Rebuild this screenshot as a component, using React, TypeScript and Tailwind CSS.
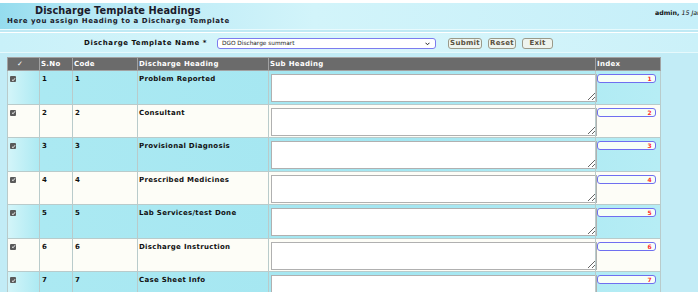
import React from "react";

const rows = [
  { n: 1, h: "Problem Reported" },
  { n: 2, h: "Consultant" },
  { n: 3, h: "Provisional Diagnosis" },
  { n: 4, h: "Prescribed Medicines" },
  { n: 5, h: "Lab Services/test Done" },
  { n: 6, h: "Discharge Instruction" },
  { n: 7, h: "Case Sheet Info" },
];

function Check() {
  return (
    <div className="w-[6px] h-[6px] bg-[#5a5a5a] rounded-[1px] flex items-center justify-center">
      <svg width="5" height="5" viewBox="0 0 10 10">
        <path d="M2 5.5 L4.2 7.5 L8 2.5" stroke="white" strokeWidth="1.8" fill="none" />
      </svg>
    </div>
  );
}

export default function App() {
  return (
    <div className="w-[698px] h-[292px] overflow-hidden bg-[#c2ecf6] font-['DejaVu_Sans',Verdana,sans-serif] text-[#111]">
      <div className="h-[3px] bg-white" />
      <div className="h-[26px] bg-[linear-gradient(to_right,#95dcee_0%,#b5e8f5_12%,#d2f4fa_45%,#c6eff9_100%)] flex justify-between">
        <div className="flex flex-col">
          <div className="pl-[35px] pt-[1px] text-[9.8px] leading-[13px] font-bold tracking-[0.05px] text-[#1b1b2b]">Discharge Template Headings</div>
          <div className="pl-[7px] text-[7px] leading-[9px] font-bold tracking-[0.55px] text-[#1b1b2b]">Here you assign Heading to a Discharge Template</div>
        </div>
        <div className="pt-[6px] w-[43px] whitespace-nowrap overflow-hidden text-[6.3px] leading-[8px]">
          <span className="font-bold">admin,</span> <span className="italic">15 Jan</span>
        </div>
      </div>
      <div className="h-[1px] bg-[#e8fafd]" />
      <div className="h-[2px] bg-[#bfe9f4]" />
      <div className="h-[1px] bg-white" />
      <div className="h-[20px] bg-[linear-gradient(to_right,#c9f1f9,#d9f6fb_50%,#cbf1f9)] border-b border-[#e6f9fc] flex items-center pt-[2px]">
        <div className="w-[207px] text-right text-[7px] font-bold tracking-[0.55px]">Discharge Template Name *</div>
        <div className="ml-[10px] relative w-[219px] h-[11px] border border-[#7c7cef] rounded-[3px] bg-white flex items-center">
          <span className="pl-[4px] text-[5.8px] text-[#222]">DGO Discharge summart</span>
          <svg className="absolute right-[5px] top-[3px]" width="5" height="4" viewBox="0 0 10 8">
            <path d="M1 1.5 L5 5.5 L9 1.5" stroke="#222" strokeWidth="2" fill="none" />
          </svg>
        </div>
        <div className="ml-[12px] flex gap-[6px]">
          <div className="w-[34px] h-[11px] border border-[#9a9a8a] rounded-[3px] bg-[#eef4ee] text-[7px] font-bold text-[#5a5040] flex items-center justify-center tracking-[0.3px]">Submit</div>
          <div className="w-[28px] h-[11px] border border-[#9a9a8a] rounded-[3px] bg-[#eef4ee] text-[7px] font-bold text-[#5a5040] flex items-center justify-center tracking-[0.3px]">Reset</div>
          <div className="w-[31px] h-[11px] border border-[#9a9a8a] rounded-[3px] bg-[#eef4ee] text-[7px] font-bold text-[#5a5040] flex items-center justify-center tracking-[0.3px]">Exit</div>
        </div>
      </div>
      <div className="pt-[4px] pl-[7px]">
        <table className="border-collapse table-fixed w-[653px] text-[7px] font-bold tracking-[0.3px]">
          <colgroup>
            <col className="w-[32px]" />
            <col className="w-[33px]" />
            <col className="w-[65px]" />
            <col className="w-[131px]" />
            <col className="w-[327px]" />
            <col className="w-[65px]" />
          </colgroup>
          <thead>
            <tr className="h-[13px] bg-[#6b6b6b] text-white">
              <th className="border border-[#a2a2a2] text-left font-bold p-0 pl-[9px]">✓</th>
              <th className="border border-[#a2a2a2] text-left font-bold p-0 pl-[1px]">S.No</th>
              <th className="border border-[#a2a2a2] text-left font-bold p-0 pl-[1px]">Code</th>
              <th className="border border-[#a2a2a2] text-left font-bold p-0 pl-[1px]">Discharge Heading</th>
              <th className="border border-[#a2a2a2] text-left font-bold p-0 pl-[1px]">Sub Heading</th>
              <th className="border border-[#a2a2a2] text-left font-bold p-0 pl-[1px]">Index</th>
            </tr>
          </thead>
          <tbody>
            {rows.map((r, i) => {
              const cyan = i % 2 === 0;
              const rowCls = cyan
                ? "h-[33.5px] bg-[linear-gradient(to_right,#d3f5f9_0%,#abe9f2_5%,#a3e6f1_60%,#b6edf5_100%)]"
                : "h-[33.5px] bg-[#fdfdf7]";
              return (
                <tr key={r.n} className={rowCls}>
                  <td className="border border-[#b9cbcb] align-top p-0 pl-[2px] pt-[5px]">
                    <Check />
                  </td>
                  <td className="border border-[#b9cbcb] align-top p-0 pl-[2px] pt-[3px]">{r.n}</td>
                  <td className="border border-[#b9cbcb] align-top p-0 pl-[2px] pt-[3px]">{r.n}</td>
                  <td className="border border-[#b9cbcb] align-top p-0 pl-[1px] pt-[3px]">{r.h}</td>
                  <td className="border border-[#b9cbcb] align-top p-0 pl-[2px] pt-[3px]">
                    <textarea className="block w-[326px] h-[28px] border border-[#b0b0b0] bg-white" />
                  </td>
                  <td className="border border-[#b9cbcb] align-top p-0 pl-[1px] pt-[3px]">
                    <div className="w-[59px] h-[9px] border border-[#6f6ff0] rounded-[3px] bg-[#f7fff7] text-right pr-[3px] text-[6px] leading-[7px] text-[#ff2a2a] font-bold">
                      {r.n}
                    </div>
                  </td>
                </tr>
              );
            })}
          </tbody>
        </table>
      </div>
    </div>
  );
}
